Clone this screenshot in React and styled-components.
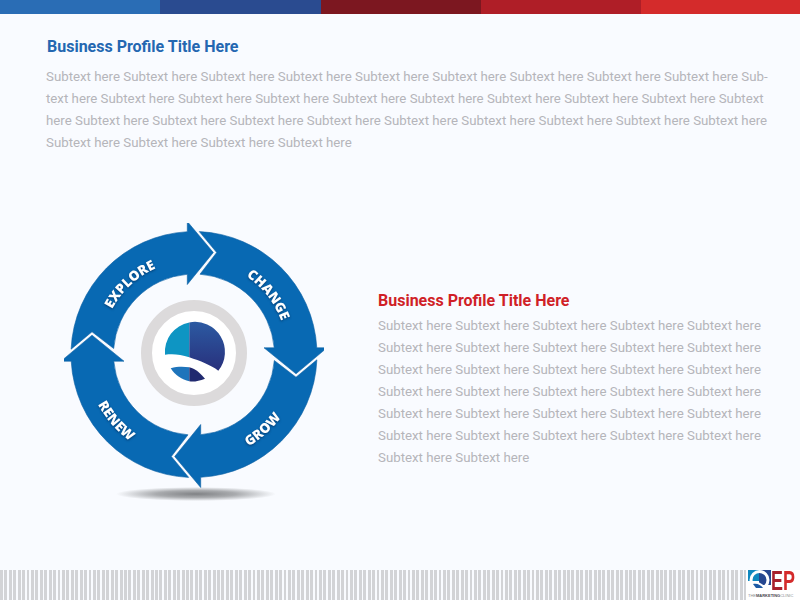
import React from "react"
import styled, { createGlobalStyle } from "styled-components"

const CX = 130
const CY = 130
const filler = "Subtext here "

const topBarColors = ["#2a6db5", "#2a4b90", "#7c1720", "#af1e27", "#d42b2b"]

const introLines = [
    filler.repeat(9) + "Sub-",
    "text here " + filler.repeat(8) + "Subtext",
    "here " + filler.repeat(8) + "Subtext here",
    filler.repeat(4).trim(),
]

const sideLines = [
    filler.repeat(5).trim(),
    filler.repeat(5).trim(),
    filler.repeat(5).trim(),
    filler.repeat(5).trim(),
    filler.repeat(5).trim(),
    filler.repeat(5).trim(),
    filler.repeat(2).trim(),
]

// angle is measured clockwise from straight up, labels on the lower half run the other way round
const labels = [
    { text: "EXPLORE", radius: 93, angle: -43, upper: true },
    { text: "CHANGE", radius: 93, angle: 52, upper: true },
    { text: "GROW", radius: 108, angle: 138, upper: false },
    { text: "RENEW", radius: 109, angle: 229, upper: false },
]

function polar(radius, deg) {
    const rad = (deg * Math.PI) / 180
    return `${(CX + radius * Math.sin(rad)).toFixed(1)} ${(CY - radius * Math.cos(rad)).toFixed(1)}`
}

function labelArc({ radius, angle, upper }) {
    const start = upper ? angle - 45 : angle + 45
    const end = upper ? angle + 45 : angle - 45
    return `M ${polar(radius, start)} A ${radius} ${radius} 0 0 ${upper ? 1 : 0} ${polar(radius, end)}`
}

function CycleDiagram() {
    // one segment runs from the notch behind it to its own head, repeated every 90 degrees
    const segment = "M -102 -22.7 L -122.9 -5.3 A 123 123 0 0 1 -6.7 -122.8 L -6.7 -133 L 19.3 -102 L -6.7 -70 L -6.7 -80.2 A 80.5 80.5 0 0 0 -80.3 -6 Z"
    return (
        <svg width="260" height="290" viewBox="0 0 260 290">
            <defs>
                <radialGradient id="floorShadow">
                    <stop offset="0%" stopColor="#808285" />
                    <stop offset="50%" stopColor="#a9abae" />
                    <stop offset="100%" stopColor="#f9fbff" />
                </radialGradient>
                <linearGradient id="ballDark" x1="0" y1="0" x2="0" y2="1">
                    <stop offset="0%" stopColor="#2c5aa2" />
                    <stop offset="100%" stopColor="#28307c" />
                </linearGradient>
                {labels.map((label) => (
                    <path key={label.text} id={`arc-${label.text}`} d={labelArc(label)} />
                ))}
            </defs>
            <ellipse cx={CX + 2} cy={271} rx="80" ry="7" fill="url(#floorShadow)" />
            <g transform={`translate(${CX} ${CY + 1.5})`}>
                {[0, 90, 180, 270].map((angle) => (
                    <path
                        key={angle}
                        d={segment}
                        transform={`rotate(${angle})`}
                        fill="#0869b3"
                        stroke="#0b5fa3"
                        strokeWidth="0.6"
                    />
                ))}
            </g>
            <g transform={`translate(${CX} ${CY})`}>
                <circle r="47.5" fill="#ffffff" stroke="#dcdadb" strokeWidth="11" />
                <path d="M -29 1.7 A 30 30 0 0 1 -4.7 -30.6 L -4.7 4.3 C -14 1 -22 0.8 -29 1.7 Z" fill="#0e95c3" />
                <path d="M -4.7 -30.6 A 30 30 0 0 1 24.3 17.7 C 17 12 6 8 -4.7 4.3 Z" fill="url(#ballDark)" />
                <path d="M -23.3 15.3 C -17 13.5 -11 13.6 -4.7 14.3 L -4.7 28.3 C -12 27 -19 22 -23.3 15.3 Z" fill="#1e74bb" />
                <path d="M -4.7 14.3 C 2 16 7 21 11 25.7 C 5 28 0 29 -4.7 28.3 Z" fill="#20296f" />
            </g>
            {labels.map((label) => (
                <ArcLabel key={label.text}>
                    <textPath href={`#arc-${label.text}`} startOffset="50%">{label.text}</textPath>
                </ArcLabel>
            ))}
        </svg>
    )
}

function BrandMark() {
    return (
        <BrandBox>
            <BrandRow>
                <svg width="23" height="21" viewBox="0 0 23 21">
                    <rect width="23" height="21" fill="#ffffff" />
                    <path d="M 0 0 H 11 V 11 H 0 Z" fill="#1088bf" />
                    <path d="M 11 0 H 23 V 15 H 11 Z" fill="#27478f" />
                    <circle cx="11.5" cy="10" r="8.5" fill="none" stroke="#ffffff" strokeWidth="3" />
                    <path d="M 1 12 C 8 9 15 14 21 20 L 23 17 L 23 21 L 0 21 Z" fill="#ffffff" />
                    <path d="M 5 14 C 9 13 13 15 15 18 L 8 18 Z" fill="#1e5aa5" />
                </svg>
                <BrandLetter $width={12} $color="#a8202c">E</BrandLetter>
                <BrandLetter $width={13} $color="#d42b2b">P</BrandLetter>
            </BrandRow>
            <BrandCaption>THE<b>MARKETING</b>CLINIC</BrandCaption>
        </BrandBox>
    )
}

export default function App() {
    return (
        <>
            <GlobalStyle />
            <Page>
                <TopBar>
                    {topBarColors.map((color) => (
                        <TopBarPart key={color} $color={color} />
                    ))}
                </TopBar>
                <Intro>
                    <IntroTitle>Business Profile Title Here</IntroTitle>
                    <BodyText>
                        {introLines.map((line) => (
                            <Line key={line}>{line}</Line>
                        ))}
                    </BodyText>
                </Intro>
                <Feature>
                    <CycleDiagram />
                    <SideCopy>
                        <SideTitle>Business Profile Title Here</SideTitle>
                        <BodyText>
                            {sideLines.map((line, index) => (
                                <Line key={index}>{line}</Line>
                            ))}
                        </BodyText>
                    </SideCopy>
                </Feature>
                <Footer>
                    <Stripes />
                    <BrandMark />
                </Footer>
            </Page>
        </>
    )
}

const GlobalStyle = createGlobalStyle`
    html, body {
        margin: 0;
        padding: 0;
        background: #f9fbff;
    }
`

const Page = styled.div`
    display: flex;
    flex-direction: column;
    width: 800px;
    height: 600px;
    overflow: hidden;
    background: #f9fbff;
    font-family: Roboto, "Liberation Sans", sans-serif;
`

const TopBar = styled.div`
    display: grid;
    grid-template-columns: 160px 161px 160px 160px 159px;
    height: 14px;
`

const TopBarPart = styled.div`
    background: ${(props) => props.$color};
`

const Intro = styled.section`
    display: flex;
    flex-direction: column;
    padding: 23px 0 0 46px;
`

const IntroTitle = styled.h1`
    margin: 0 0 9px 1px;
    font-size: 16px;
    line-height: 20px;
    font-weight: 700;
    color: #2467b1;
`

const BodyText = styled.div`
    font-size: 13.27px;
    line-height: 22px;
    color: #b5b5ba;
`

const Line = styled.div`
    white-space: nowrap;
`

const Feature = styled.section`
    display: flex;
    align-items: flex-start;
    margin-top: 69px;
    padding-left: 64px;
`

const SideCopy = styled.div`
    display: flex;
    flex-direction: column;
    margin: 68px 0 0 54px;
`

const SideTitle = styled.h2`
    margin: 0 0 4px;
    font-size: 16px;
    line-height: 20px;
    font-weight: 700;
    color: #d01f27;
`

const ArcLabel = styled.text`
    font-family: "Open Sans", sans-serif;
    font-size: 13.5px;
    font-weight: 800;
    fill: #ffffff;
    text-anchor: middle;
    filter: drop-shadow(0 1px 1px rgba(0, 30, 70, 0.6));
`

const Footer = styled.footer`
    display: flex;
    align-items: stretch;
    height: 30px;
    margin-top: auto;
`

const Stripes = styled.div`
    flex: 1;
    background: repeating-linear-gradient(
        90deg,
        #d2d3d6 0,
        #d2d3d6 2.9px,
        #f9fbff 2.9px,
        #f9fbff 4.43px
    );
`

const BrandBox = styled.div`
    display: flex;
    flex-direction: column;
    align-items: flex-start;
    width: 54px;
    padding-left: 2px;
    background: #ffffff;
    box-sizing: border-box;
`

const BrandRow = styled.div`
    display: flex;
    align-items: flex-start;
    height: 22px;
`

const BrandLetter = styled.span`
    display: block;
    width: ${(props) => props.$width}px;
    font-family: "Liberation Sans", sans-serif;
    font-size: 28px;
    line-height: 21px;
    font-weight: 700;
    color: ${(props) => props.$color};
    transform: scaleX(0.64);
    transform-origin: left center;
`

const BrandCaption = styled.div`
    font-family: "Liberation Sans", sans-serif;
    font-size: 4px;
    line-height: 7px;
    white-space: nowrap;
    color: #8b8d92;
    b {
        color: #4a4c52;
    }
`
